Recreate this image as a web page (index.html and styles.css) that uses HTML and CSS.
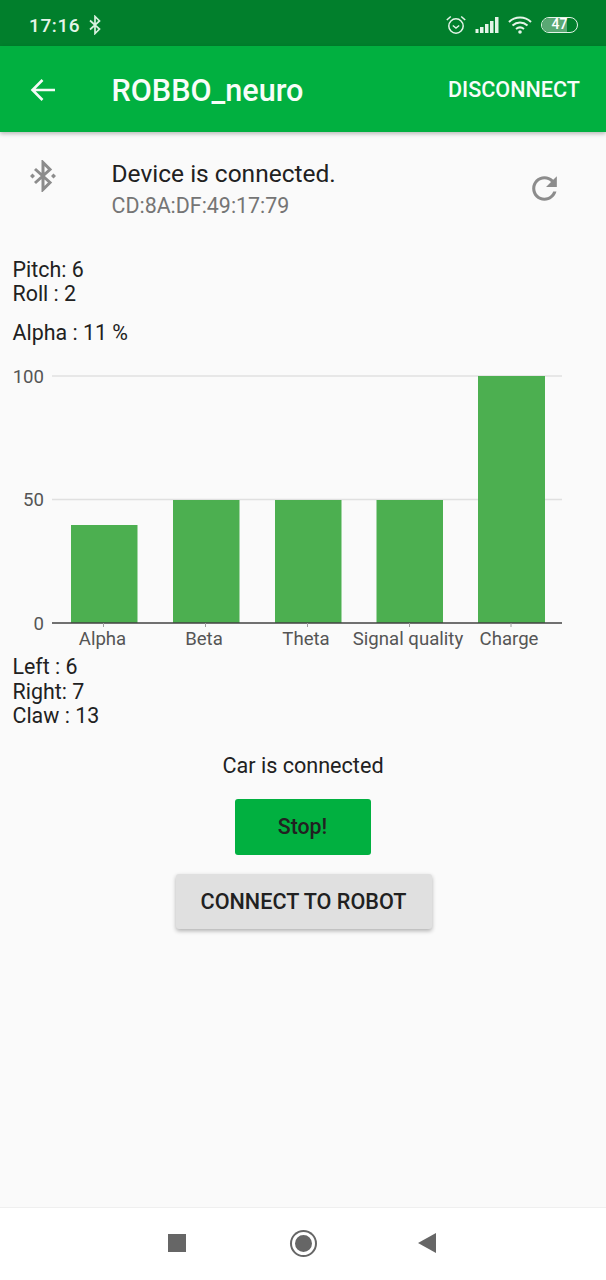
FILE: index.html
```html
<!DOCTYPE html>
<html lang="en">
<head>
    <meta charset="UTF-8">
    <title>ROBBO_neuro</title>
    <link rel="stylesheet" href="styles.css">
</head>
<body>
    <div class="screen">
        <div class="status-bar">
            <div class="status-left">
                <span class="clock">17:16</span>
                <svg class="bt-small" width="14" height="20" viewBox="0 0 14 20"><path d="M2 5.5 L11.5 14 L7 18.5 V1.5 L11.5 6 L2 14.5" fill="none" stroke="#d9f0df" stroke-width="1.7"/></svg>
            </div>
            <div class="status-right">
                <svg width="20" height="20" viewBox="0 0 20 20"><circle cx="10" cy="11" r="7.2" fill="none" stroke="#e4f4e8" stroke-width="1.5"/><path d="M6.8 10.5 L10 13 L13.200 10.500" fill="none" stroke="#e4f4e8" stroke-width="1.4"/><path d="M0.800 5 L4.800 1.500 M19.200 5 L15.200 1.500" stroke="#e4f4e8" stroke-width="1.6"/></svg>
                <svg width="24" height="18" viewBox="0 0 24 18"><path d="M0.500 13h3v4h-3zM5 11h3.500v6H5zM10 8h3.500v9H10zM15 5h3.500v12H15zM20 1h3.500v16H20z" fill="#e4f4e8"/></svg>
                <svg width="24" height="18" viewBox="0 0 24 18"><path d="M1 6 C7 0 17 0 23 6 M4.500 9.500 C9 5.500 15 5.500 19.500 9.500 M8 13 C10.500 11 13.500 11 16 13" fill="none" stroke="#e4f4e8" stroke-width="2"/><circle cx="12" cy="16" r="1.800" fill="#e4f4e8"/></svg>
                <div class="battery"><span class="battery-level"></span><span class="battery-text">47</span></div>
            </div>
        </div>

        <div class="toolbar">
            <svg class="back" width="26" height="24" viewBox="0 0 26 24"><path d="M25 12 H3 M12.500 2 L2.500 12 L12.500 22" fill="none" stroke="#f4fbf6" stroke-width="2.600"/></svg>
            <h1 class="title">ROBBO_neuro</h1>
            <span class="disconnect">DISCONNECT</span>
        </div>

        <div class="device">
            <svg class="bt-icon" width="30" height="32" viewBox="0 0 30 32"><path d="M7 9 L22 22.500 L15 29.500 V2.500 L22 9.500 L7 23" fill="none" stroke="#8c8c8c" stroke-width="3"/><path d="M2 16l2.500-2.500L7 16l-2.500 2.500zM23 16l2.500-2.500L28 16l-2.500 2.500z" fill="#8c8c8c"/></svg>
            <div class="device-info">
                <div class="device-state">Device is connected.</div>
                <div class="device-mac">CD:8A:DF:49:17:79</div>
            </div>
            <svg class="refresh" width="37" height="37" viewBox="0 0 24 24"><path d="M17.650 6.350C16.200 4.900 14.210 4 12 4c-4.420 0-7.990 3.580-7.990 8s3.570 8 7.990 8c3.730 0 6.840-2.550 7.730-6h-2.080c-.82 2.330-3.040 4-5.650 4-3.310 0-6-2.690-6-6s2.690-6 6-6c1.660 0 3.140.69 4.220 1.780L13 11h7V4l-2.350 2.350z" fill="#8c8c8c"/></svg>
        </div>

        <div class="readings pose">
            <div>Pitch: 6</div>
            <div>Roll : 2</div>
        </div>
        <div class="readings alpha">Alpha : 11 %</div>

        <svg class="chart" width="606" height="293" viewBox="0 -6 606 293">
            <line class="grid" x1="52" y1="8" x2="562" y2="8"/>
            <line class="grid" x1="52" y1="131.500" x2="562" y2="131.500"/>
            <rect class="bar" x="71" y="157" width="66.500" height="98"/>
            <rect class="bar" x="173" y="132" width="66.500" height="123"/>
            <rect class="bar" x="275" y="132" width="66.500" height="123"/>
            <rect class="bar" x="376.500" y="132" width="66.500" height="123"/>
            <rect class="bar" x="478" y="8" width="67" height="247"/>
            <line class="axis" x1="52" y1="255" x2="562" y2="255"/>
            <path class="tick-mark" d="M103.500 255v4M205.500 255v4M307.500 255v4M409.500 255v4M511 255v4"/>
            <text class="tick" x="44" y="14.500" text-anchor="end">100</text>
            <text class="tick" x="44" y="138" text-anchor="end">50</text>
            <text class="tick" x="44" y="261.500" text-anchor="end">0</text>
            <text class="label" x="102.500" y="277" text-anchor="middle">Alpha</text>
            <text class="label" x="204" y="277" text-anchor="middle">Beta</text>
            <text class="label" x="306" y="277" text-anchor="middle">Theta</text>
            <text class="label" x="408" y="277" text-anchor="middle">Signal quality</text>
            <text class="label" x="509" y="277" text-anchor="middle">Charge</text>
        </svg>

        <div class="readings motors">
            <div>Left : 6</div>
            <div>Right: 7</div>
            <div>Claw : 13</div>
        </div>

        <div class="car-state">Car is connected</div>
        <div class="actions">
            <button class="btn-stop">Stop!</button>
            <button class="btn-connect">CONNECT TO ROBOT</button>
        </div>

        <div class="nav-bar">
            <span class="nav-square"></span>
            <span class="nav-home"></span>
            <span class="nav-back"></span>
        </div>
    </div>
</body>
</html>
```
FILE: styles.css
```css
html, body {
    margin: 0;
    padding: 0;
}

body {
    font-family: Roboto, "Liberation Sans", sans-serif;
    background: #fafafa;
    color: #212121;
}

.screen {
    width: 606px;
    height: 1280px;
    display: flex;
    flex-direction: column;
    overflow: hidden;
}

.status-bar {
    height: 46px;
    box-sizing: border-box;
    flex: none;
    background: #017f2c;
    color: #e4f4e8;
    display: flex;
    justify-content: space-between;
    align-items: center;
    padding: 4px 28px 0 29px;
}

.status-left {
    display: flex;
    align-items: center;
    gap: 8px;
}

.clock {
    font-size: 19px;
    font-weight: 500;
    letter-spacing: 0.6px;
}

.status-right {
    display: flex;
    align-items: center;
    gap: 9px;
}

.battery {
    position: relative;
    box-sizing: border-box;
    width: 37px;
    height: 16px;
    border: 1.500px solid #e4f4e8;
    border-radius: 8px;
    overflow: hidden;
    text-align: center;
}

.battery-level {
    position: absolute;
    left: 0;
    top: 0;
    bottom: 0;
    width: 70%;
    background: #5aa874;
}

.battery-text {
    position: relative;
    font-size: 14px;
    line-height: 13px;
    font-weight: 500;
    display: block;
    color: #fff;
}

.toolbar {
    height: 86px;
    box-sizing: border-box;
    flex: none;
    background: #01b040;
    color: #f8fdf9;
    display: flex;
    align-items: center;
    padding: 1px 26px 0 30px;
    box-shadow: 0 2px 4px rgba(0, 0, 0, 0.25);
    position: relative;
}

.title {
    margin: 2px 0 0 55.500px;
    flex: 1;
    font-size: 30.600px;
    font-weight: 500;
}

.disconnect {
    font-size: 21.600px;
    font-weight: 500;
}

.device {
    display: flex;
    align-items: flex-start;
    height: 96px;
    flex: none;
    padding-left: 28px;
}

.bt-icon {
    margin-top: 28px;
    flex: none;
}

.device-info {
    margin-left: 53.500px;
    flex: 1;
    padding-top: 27px;
}

.device-state {
    font-size: 24.500px;
    line-height: 30px;
}

.device-mac {
    font-size: 21.400px;
    line-height: 30px;
    color: #757575;
    margin-top: 2px;
}

.refresh {
    flex: none;
    margin: 38px 43px 0 0;
}

.readings {
    font-size: 21.400px;
    line-height: 24.500px;
    padding-left: 12.500px;
}

.pose {
    margin-top: 29.500px;
    line-height: 24px;
}

.alpha {
    margin-top: 15.500px;
}

.chart {
    display: block;
    flex: none;
    margin-top: 16.500px;
}

.grid {
    stroke: #e0e0e0;
    stroke-width: 1.500;
}

.axis {
    stroke: #424242;
    stroke-width: 1.500;
}

.tick-mark {
    stroke: #9e9e9e;
    stroke-width: 1;
}

.bar {
    fill: #4caf50;
}

.tick, .label {
    font-size: 18.600px;
    fill: #555;
}

.car-state {
    font-size: 21.600px;
    line-height: 26px;
    text-align: center;
    margin-top: 24px;
}

.actions {
    display: flex;
    flex-direction: column;
    align-items: center;
    margin-top: 20px;
    gap: 19px;
}

.actions button {
    border: none;
    font-family: inherit;
    color: #212121;
    border-radius: 3px;
    padding: 0;
}

.btn-stop {
    width: 136px;
    height: 56px;
    background: #01b040;
    color: #102b18;
    font-size: 21.300px;
    font-weight: 500;
    margin-right: 1px;
}

.btn-connect {
    width: 256px;
    height: 55px;
    background: #e0e0e0;
    font-size: 21.600px;
    font-weight: 500;
    box-shadow: 0 2px 4px rgba(0, 0, 0, 0.3);
    margin-left: 1px;
}

.nav-bar {
    margin-top: auto;
    height: 73px;
    box-sizing: border-box;
    flex: none;
    background: #fff;
    border-top: 1px solid #efefef;
    display: flex;
    align-items: center;
    justify-content: center;
    gap: 106px;
    padding: 0 3px 2px 0;
}

.nav-square {
    width: 18px;
    height: 18px;
    background: #666;
}

.nav-home {
    width: 17px;
    height: 17px;
    background: #666;
    border-radius: 50%;
    border: 3px solid #fff;
    box-shadow: 0 0 0 2px #666;
}

.nav-back {
    width: 0;
    height: 0;
    margin-left: -3px;
    border-top: 10px solid transparent;
    border-bottom: 10px solid transparent;
    border-right: 18px solid #666;
}
```
